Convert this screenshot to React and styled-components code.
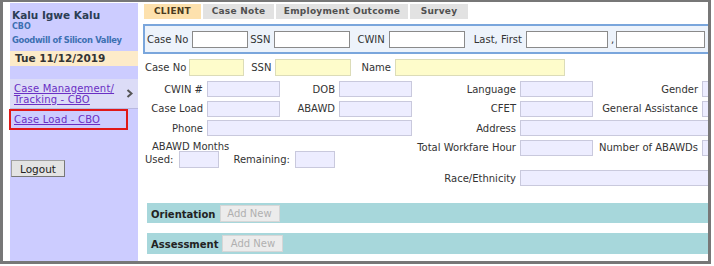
import React from "react";
import styled, { createGlobalStyle } from "styled-components";

const GlobalStyle = createGlobalStyle`
    body {
        margin: 0;
        background: #ffffff;
        font-family: "DejaVu Sans", Verdana, sans-serif;
        font-size: 10px;
        color: #333;
    }
`

const Frame = styled.div`
    width: 711px;
    height: 264px;
    box-sizing: border-box;
    border-style: solid;
    border-color: #777;
    border-width: 2px 3px 3px 3px;
    display: flex;
    padding: 1px 0 0 7px;
    gap: 5px;
    overflow: hidden;
`

/* ---------- sidebar ---------- */

const Sidebar = styled.div`
    width: 128px;
    flex: none;
    background: #ccccff;
    display: flex;
    flex-direction: column;
`

const UserName = styled.div`
    font-weight: bold;
    font-size: 10.5px;
    color: #2c3e55;
    padding: 5px 0 0 2px;
    line-height: 14px;
`

const Org = styled.div`
    font-weight: bold;
    font-size: ${p => p.small ? "8px" : "8.4px"};
    color: #3d70b2;
    padding-left: 2px;
    line-height: ${p => p.small ? "10px" : "16px"};
    letter-spacing: ${p => p.small ? "0" : "-0.35px"};
    white-space: nowrap;
`

const DateBox = styled.div`
    margin-top: 3px;
    background: #fdebc9;
    height: 15px;
    line-height: 15px;
    font-weight: bold;
    font-size: 10.5px;
    color: #333;
    padding-left: 5px;
`

const MenuItem = styled.div`
    margin-top: 13px;
    background: #dcdcf7;
    height: 29px;
    display: flex;
    align-items: center;
    justify-content: space-between;
    padding: 0 5px 0 4px;
    border-bottom: 1px solid #b8b8e0;
`

const MenuLink = styled.a`
    color: #6a2fc4;
    text-decoration: underline;
    font-size: 10px;
    line-height: 11px;
    letter-spacing: 0.2px;
`

const Chevron = styled.svg`
    width: 7px;
    height: 9px;
`

const ActiveItem = styled.div`
    margin: 0 10px 0 -1px;
    height: 17px;
    border: 2px solid #e01818;
    display: flex;
    align-items: center;
    padding-left: 3px;
`

const LogoutButton = styled.button`
    margin: 30px 0 0 1px;
    width: 54px;
    height: 17px;
    padding: 0;
    background: #e3e3e3;
    border: 1px solid #a0a0a0;
    border-right-color: #777;
    border-bottom-color: #777;
    font-family: inherit;
    font-size: 10.5px;
    color: #222;
`

/* ---------- main ---------- */

const Main = styled.div`
    flex: 1;
    min-width: 0;
    display: flex;
    flex-direction: column;
`

const Tabs = styled.div`
    display: flex;
    gap: 2px;
    margin: 1px 0 0 1px;
`

const Tab = styled.div`
    height: 15px;
    line-height: 15px;
    font-weight: bold;
    font-size: 9px;
    letter-spacing: 0.25px;
    color: ${p => p.active ? "#4a3a20" : "#505050"};
    background: ${p => p.active ? "#fde1ad" : "#e2e2e2"};
    width: ${p => p.w}px;
    text-align: center;
`

const SearchBox = styled.div`
    margin-top: 5px;
    height: 26px;
    width: 600px;
    background: #edf3fb;
    border: 2px solid #7aa6dc;
    border-right: none;
    display: flex;
    align-items: center;
    padding-left: 2px;
`

const Label = styled.span`
    margin-left: ${p => p.ml || 0}px;
    margin-right: ${p => p.mr || 4}px;
    white-space: nowrap;
`

const Input = styled.div`
    flex: none;
    box-sizing: border-box;
    width: ${p => p.w}px;
    height: ${p => p.h || 17}px;
    margin-left: ${p => p.ml || 0}px;
    background: ${p => p.tone === "yellow" ? "#fefccb" : p.tone === "lav" ? "#ededff" : "#ffffff"};
    border: 1px solid ${p => p.tone === "yellow" ? "#dcdcb8" : p.tone === "lav" ? "#c9c9dd" : "#8a8a8a"};
`

const InfoRow = styled.div`
    margin-top: 5px;
    display: flex;
    align-items: center;
    padding-left: 2px;
`

const Grid = styled.div`
    margin-top: 5px;
    display: grid;
    grid-template-columns: 60px 73px 51px 73px 100px 73px 101px 73px;
    grid-template-rows: 16px 16px 16px 16px 16px;
    column-gap: 4px;
    row-gap: 3.5px;
`

const GridLabel = styled.div`
    text-align: right;
    align-self: center;
    white-space: nowrap;
    grid-column: ${p => p.col || "auto"};
    grid-row: ${p => p.row || "auto"};
`

const Field = styled.div`
    box-sizing: border-box;
    height: 16px;
    background: #ededff;
    border: 1px solid #c9c9dd;
    grid-column: ${p => p.span ? `span ${p.span}` : p.col || "auto"};
    grid-row: ${p => p.row || "auto"};
`

const AbawdBlock = styled.div`
    grid-column: 1 / 5;
    grid-row: 4 / 6;
    display: flex;
    flex-direction: column;
`

const AbawdTitle = styled.div`
    padding: 1px 0 0 9px;
    line-height: 12px;
`

const AbawdRow = styled.div`
    display: flex;
    align-items: center;
    padding-left: 2px;
    margin-top: -2px;
`

const RaceLabel = styled(GridLabel)`
    grid-column: 5;
    grid-row: 5;
    transform: translateY(11px);
`

const RaceField = styled(Field)`
    grid-column: 6 / 9;
    grid-row: 5;
    transform: translateY(11px);
`

const SectionBar = styled.div`
    margin: ${p => p.mt}px 0 0 4px;
    height: ${p => p.h}px;
    background: #a7d7db;
    display: flex;
    align-items: center;
    padding-left: 4px;
`

const SectionTitle = styled.span`
    font-weight: bold;
    color: #222;
    font-size: 10px;
    margin-right: 4px;
    margin-top: 2px;
`

const AddButton = styled.button`
    width: ${p => p.w}px;
    height: 17px;
    padding: 0;
    background: #ececec;
    border: 1px solid #d6d6d6;
    color: #b0b0b0;
    font-family: inherit;
    font-size: 10px;
`

const ChevronIcon = () => (
    <Chevron viewBox="0 0 7 9">
        <path d="M1.5 1 L5.5 4.5 L1.5 8" stroke="#555" strokeWidth="2" fill="none" />
    </Chevron>
)

const SideNav = () => (
    <Sidebar>
        <UserName>Kalu Igwe Kalu</UserName>
        <Org small>CBO</Org>
        <Org>Goodwill of Silicon Valley</Org>
        <DateBox>Tue 11/12/2019</DateBox>
        <MenuItem>
            <MenuLink href="#">Case Management/<br />Tracking - CBO</MenuLink>
            <ChevronIcon />
        </MenuItem>
        <ActiveItem>
            <MenuLink href="#">Case Load - CBO</MenuLink>
        </ActiveItem>
        <LogoutButton>Logout</LogoutButton>
    </Sidebar>
)

const tabs = [
    { name: "CLIENT", w: 57, active: true },
    { name: "Case Note", w: 71 },
    { name: "Employment Outcome", w: 132 },
    { name: "Survey", w: 58 },
]

const gridRows = [
    ["CWIN #", "DOB", "Language", "Gender"],
    ["Case Load", "ABAWD", "CFET", "General Assistance"],
]

const ClientForm = () => (
    <Main>
        <Tabs>
            {tabs.map(t => <Tab key={t.name} w={t.w} active={t.active}>{t.name}</Tab>)}
        </Tabs>

        <SearchBox>
            <Label>Case No</Label>
            <Input w={56} />
            <Label ml={2}>SSN</Label>
            <Input w={76} />
            <Label ml={7}>CWIN</Label>
            <Input w={76} />
            <Label ml={9}>Last, First</Label>
            <Input w={82} />
            <Label ml={3} mr={2}>,</Label>
            <Input w={89} />
            <Input w={30} ml={4} />
        </SearchBox>

        <InfoRow>
            <Label mr={3}>Case No</Label>
            <Input tone="yellow" w={55} />
            <Label ml={7}>SSN</Label>
            <Input tone="yellow" w={76} />
            <Label ml={10}>Name</Label>
            <Input tone="yellow" w={170} />
        </InfoRow>

        <Grid>
            {gridRows.map(row => row.map(label => (
                <React.Fragment key={label}>
                    <GridLabel>{label}</GridLabel>
                    <Field />
                </React.Fragment>
            )))}
            <GridLabel>Phone</GridLabel>
            <Field span={3} />
            <GridLabel>Address</GridLabel>
            <Field span={3} />

            <AbawdBlock>
                <AbawdTitle>ABAWD Months</AbawdTitle>
                <AbawdRow>
                    <Label mr={6}>Used:</Label>
                    <Input tone="lav" w={40} />
                    <Label ml={14} mr={5}>Remaining:</Label>
                    <Input tone="lav" w={40} />
                </AbawdRow>
            </AbawdBlock>
            <GridLabel col={5} row={4}>Total Workfare Hour</GridLabel>
            <Field col={6} row={4} />
            <GridLabel col={7} row={4}>Number of ABAWDs</GridLabel>
            <Field col={8} row={4} />

            <RaceLabel>Race/Ethnicity</RaceLabel>
            <RaceField />
        </Grid>

        <SectionBar mt={28} h={20}>
            <SectionTitle>Orientation</SectionTitle>
            <AddButton w={60}>Add New</AddButton>
        </SectionBar>
        <SectionBar mt={10} h={21}>
            <SectionTitle>Assessment</SectionTitle>
            <AddButton w={61}>Add New</AddButton>
        </SectionBar>
    </Main>
)

const App = () => (
    <>
        <GlobalStyle />
        <Frame>
            <SideNav />
            <ClientForm />
        </Frame>
    </>
)

export default App;
